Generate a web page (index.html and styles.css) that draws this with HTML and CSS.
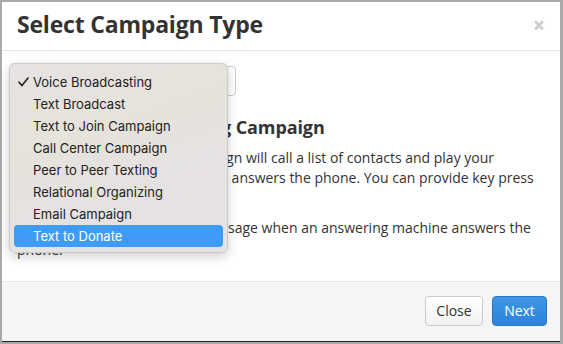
FILE: index.html
```html
<!DOCTYPE html>
<html>
<head>
<meta charset="utf-8">
<link rel="stylesheet" href="styles.css">
</head>
<body>
<div class="modal">
  <div class="modal-header">
    <h2 class="modal-title">Select Campaign Type</h2>
    <span class="close">×</span>
  </div>
  <div class="modal-body">
    <div class="select-box">
      <span class="select-value">Voice Broadcasting</span>
      <svg class="caret" width="8" height="6" viewBox="0 0 8 6"><path d="M1 1.5 L4 4.5 L7 1.5" fill="none" stroke="#444" stroke-width="1.3"/></svg>
    </div>
    <h3 class="type-title">New Voice Broadcasting Campaign</h3>
    <p class="desc">Your Voice Broadcasting campaign will call a list of contacts and play your<br>recorded sounds when a person answers the phone. You can provide key press<br>options for them to respond.</p>
    <p class="desc second">You can also use a different message when an answering machine answers the<br>phone.</p>
    <ul class="menu">
      <li class="item checked"><svg class="check" width="11" height="10" viewBox="0 0 11 10"><path d="M1 5.2 L4 8.6 L10 1" fill="none" stroke="#222" stroke-width="1.6" stroke-linecap="round" stroke-linejoin="round"/></svg>Voice Broadcasting</li>
      <li class="item">Text Broadcast</li>
      <li class="item">Text to Join Campaign</li>
      <li class="item">Call Center Campaign</li>
      <li class="item">Peer to Peer Texting</li>
      <li class="item">Relational Organizing</li>
      <li class="item">Email Campaign</li>
      <li class="item active">Text to Donate</li>
    </ul>
  </div>
  <div class="modal-footer">
    <button class="btn btn-default">Close</button>
    <button class="btn btn-primary">Next</button>
  </div>
</div>
</body>
</html>
```

FILE: styles.css
```css
html, body {
  margin: 0;
  padding: 0;
}
body {
  background: #a9a9a9;
  padding: 2px 3px 2px 2px;
  width: 563px;
  height: 344px;
  box-sizing: border-box;
  font-family: "Open Sans", sans-serif;
  color: #333;
}
.modal {
  background: #fff;
  height: 340px;
  box-sizing: border-box;
  border-bottom: 1px solid #222;
  display: flex;
  flex-direction: column;
}
.modal-header {
  display: flex;
  align-items: center;
  justify-content: space-between;
  padding: 7px 15px 12px 15px;
  height: 49px;
  box-sizing: border-box;
  border-bottom: 1px solid #e5e5e5;
}
.modal-title {
  margin: 0;
  font-size: 23px;
  font-weight: 700;
  line-height: 28px;
  letter-spacing: -0.2px;
  color: #333;
}
.close {
  font-size: 21px;
  font-weight: 700;
  color: #c8c8c8;
  line-height: 1;
  margin-right: 0;
  margin-top: 3px;
}
.modal-body {
  position: relative;
  flex: 1;
  padding: 15px 15px 0 15px;
}
.select-box {
  width: 219px;
  height: 30px;
  box-sizing: border-box;
  border: 1px solid #ccc;
  border-radius: 4px;
  display: flex;
  align-items: center;
  justify-content: space-between;
  padding: 0 6px 0 12px;
  font-size: 14px;
}
.type-title {
  margin: 19px 0 9px 0;
  font-size: 18px;
  font-weight: 700;
  line-height: 24px;
  letter-spacing: -0.1px;
}
.desc {
  margin: 0 0 10px 0;
  font-size: 14px;
  line-height: 20px;
}
.desc.second {
  line-height: 22px;
  margin-top: -1px;
}
.menu {
  position: absolute;
  left: 7px;
  top: 12px;
  width: 219px;
  margin: 0;
  padding: 7px 0 5px 0;
  list-style: none;
  box-sizing: border-box;
  background: linear-gradient(160deg, #e6e3e3 0%, #e5e3da 35%, #e5e2e2 60%, #e6e2e2 100%);
  border: 1px solid #cfcbcb;
  border-radius: 6px;
  box-shadow: 0 4px 12px rgba(0,0,0,0.18), 0 0 1px rgba(0,0,0,0.2);
  font-family: Inter, "Noto Sans", sans-serif;
  font-size: 13px;
  color: #222;
}
.item {
  position: relative;
  height: 22px;
  line-height: 22px;
  padding-left: 19px;
  margin: 0 4px;
  border-radius: 4px;
}
.check {
  position: absolute;
  left: 4px;
  top: 6px;
}
.item.active {
  background: #3e9bf8;
  color: #fff;
}
.modal-footer {
  display: flex;
  justify-content: flex-end;
  gap: 9px;
  padding: 14px 13px 15px 15px;
  background: #f5f5f5;
  border-top: 1px solid #e5e5e5;
}
.btn {
  height: 30px;
  font-family: "Open Sans", sans-serif;
  font-size: 14px;
  border-radius: 4px;
  padding: 0 10px;
  line-height: 28px;
}
.btn-default {
  width: 58px;
  background: linear-gradient(#fff, #f2f2f2);
  border: 1px solid #ccc;
  color: #333;
}
.btn-primary {
  width: 55px;
  background: linear-gradient(#3f95e6, #2d83db);
  border: 1px solid #2a75c5;
  color: #fff;
}
```
